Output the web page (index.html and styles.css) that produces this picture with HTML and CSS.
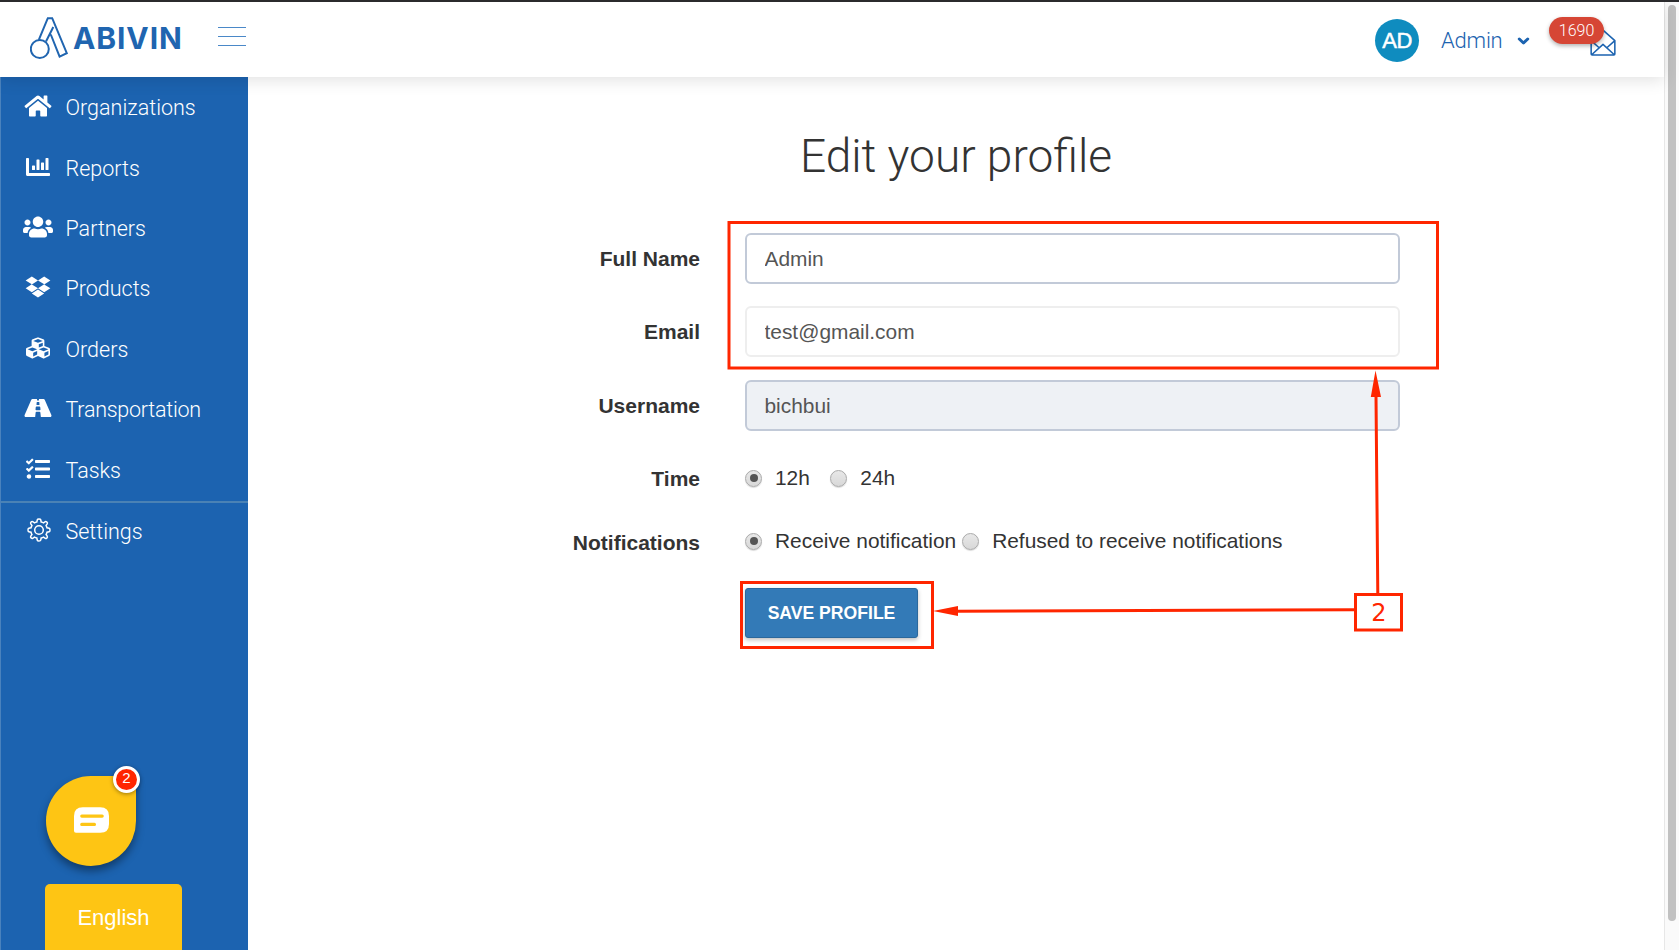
FILE: index.html
```html
<!DOCTYPE html>
<html lang="en">
<head>
<meta charset="utf-8">
<title>Edit your profile</title>
<link rel="stylesheet" href="styles.css">
</head>
<body>
<div class="app">
  <header class="header">
    <div class="brand">
      <svg class="brand-mark" viewBox="0 0 38 42" fill="none" stroke="#2065b0" stroke-width="2">
        <circle cx="9.800" cy="32" r="9"/>
        <path d="M8.800 22.800L17.800 1.200h4.400L36.800 36.200l-7.200 3.500L20.800 17.500M16 24.500L23.300 10"/>
      </svg>
      <span class="brand-name">ABIVIN</span>
    </div>
    <div class="burger"><i></i><i></i><i></i></div>
    <div class="account">
      <span class="avatar">AD</span>
      <span class="account-name">Admin</span>
      <svg class="chevron" viewBox="0 0 12 8" fill="none" stroke="#1c63b0" stroke-width="3" stroke-linecap="round" stroke-linejoin="round"><path d="M1.800 2L6 6l4.200-4"/></svg>
    </div>
    <div class="inbox">
      <svg class="inbox-icon" viewBox="0 0 27 28" fill="none" stroke="#1c63b0" stroke-width="1.600" stroke-linejoin="round"><path d="M1.200 12L13.500 1.200 25.800 12v14a1 1 0 0 1-1 1H2.200a1 1 0 0 1-1-1zM1.200 12l8.300 7.500M25.800 12l-8.300 7.500M2 26.500l11.500-10.500L25 26.500"/></svg>
      <span class="inbox-count">1690</span>
    </div>
  </header>
  <div class="body">
    <nav class="sidebar">
      <a class="item"><svg class="icon" viewBox="0 0 576 512"><path d="M280.370 148.260L96 300.110V464a16 16 0 0 0 16 16l112.060-.290a16 16 0 0 0 15.920-16V368a16 16 0 0 1 16-16h64a16 16 0 0 1 16 16v95.640a16 16 0 0 0 16 16.050L464 480a16 16 0 0 0 16-16V300L295.670 148.260a12.190 12.190 0 0 0-15.300 0zM571.600 251.470L488 182.560V44.050a12 12 0 0 0-12-12h-56a12 12 0 0 0-12 12v72.610L318.470 43a48 48 0 0 0-61 0L4.340 251.470a12 12 0 0 0-1.600 16.900l25.500 31A12 12 0 0 0 45.150 301l235.220-193.740a12.190 12.190 0 0 1 15.300 0L530.900 301a12 12 0 0 0 16.900-1.600l25.500-31a12 12 0 0 0-1.700-16.930z"/></svg><span>Organizations</span></a>
      <a class="item"><svg class="icon" viewBox="0 0 512 512"><path d="M332.800 320h38.400c6.400 0 12.800-6.400 12.800-12.800V172.800c0-6.400-6.400-12.800-12.800-12.800h-38.400c-6.400 0-12.800 6.400-12.800 12.800v134.400c0 6.400 6.400 12.800 12.800 12.800zm96 0h38.400c6.400 0 12.800-6.400 12.800-12.800V76.800c0-6.400-6.400-12.800-12.800-12.800h-38.400c-6.400 0-12.800 6.400-12.800 12.800v230.400c0 6.400 6.400 12.800 12.800 12.800zm-288 0h38.400c6.400 0 12.800-6.400 12.800-12.800v-70.400c0-6.400-6.400-12.800-12.800-12.800h-38.400c-6.400 0-12.800 6.400-12.800 12.800v70.400c0 6.400 6.400 12.800 12.800 12.800zm96 0h38.400c6.400 0 12.800-6.400 12.800-12.800V108.800c0-6.400-6.400-12.800-12.800-12.800h-38.400c-6.400 0-12.800 6.400-12.800 12.800v198.400c0 6.400 6.400 12.800 12.800 12.800zM496 384H64V80c0-8.840-7.160-16-16-16H16C7.160 64 0 71.160 0 80v336c0 17.670 14.330 32 32 32h464c8.840 0 16-7.160 16-16v-32c0-8.840-7.160-16-16-16z"/></svg><span>Reports</span></a>
      <a class="item"><svg class="icon" viewBox="0 0 640 512"><path d="M96 224c35.300 0 64-28.700 64-64s-28.700-64-64-64-64 28.700-64 64 28.700 64 64 64zm448 0c35.300 0 64-28.700 64-64s-28.700-64-64-64-64 28.700-64 64 28.700 64 64 64zm32 32h-64c-17.600 0-33.500 7.100-45.100 18.600 40.300 22.100 68.900 62 75.100 109.400h66c17.700 0 32-14.300 32-32v-32c0-35.300-28.700-64-64-64zm-256 0c61.900 0 112-50.100 112-112S381.900 32 320 32 208 82.100 208 144s50.100 112 112 112zm76.800 32h-8.300c-20.800 10-43.900 16-68.500 16s-47.600-6-68.500-16h-8.300C179.600 288 128 339.600 128 403.200V432c0 26.500 21.500 48 48 48h288c26.500 0 48-21.500 48-48v-28.800c0-63.600-51.600-115.200-115.200-115.200zm-223.700-13.400C161.500 263.100 145.600 256 128 256H64c-35.300 0-64 28.700-64 64v32c0 17.700 14.300 32 32 32h65.900c6.300-47.400 34.900-87.300 75.200-109.400z"/></svg><span>Partners</span></a>
      <a class="item"><svg class="icon" viewBox="0 0 528 512"><path d="M264.400 116.300l-132 84.300 132 84.300-132 84.300L0 284.100l132.300-84.300L0 116.300 132.300 32l132.100 84.300zM131.600 395.700l132-84.300 132 84.300-132 84.300-132-84.300zm132.800-111.600l132-84.300-132-83.600L395.700 32 528 116.300l-132.300 84.300L528 284.800l-132.300 84.300-131.300-85z"/></svg><span>Products</span></a>
      <a class="item"><svg class="icon" viewBox="0 0 512 512"><path d="M488.600 250.200L392 214V105.500c0-15-9.300-28.400-23.400-33.700l-100-37.500c-8.100-3.100-17.100-3.100-25.300 0l-100 37.500c-14.100 5.300-23.400 18.700-23.400 33.700V214l-96.600 36.200C9.300 255.500 0 268.900 0 283.900V394c0 13.600 7.700 26.100 19.900 32.200l100 50c10.100 5.100 22.100 5.100 32.200 0l103.900-52 103.900 52c10.100 5.100 22.100 5.100 32.200 0l100-50c12.200-6.100 19.900-18.600 19.900-32.200V283.900c0-15-9.300-28.400-23.400-33.700zM358 214.800l-85 31.900v-68.200l85-37v73.300zM154 104.100l102-38.200 102 38.200v.6l-102 41.400-102-41.400v-.6zm84 291.100l-85 42.500v-79.100l85-38.800v75.400zm0-112l-102 41.400-102-41.400v-.6l102-38.200 102 38.200v.6zm240 112l-85 42.500v-79.100l85-38.800v75.400zm0-112l-102 41.400-102-41.400v-.6l102-38.200 102 38.200v.6z"/></svg><span>Orders</span></a>
      <a class="item"><svg class="icon" viewBox="0 0 576 512"><path fill-rule="evenodd" d="M573.190 402.670l-139.790-320C428.430 71.290 417.600 64 405.680 64h-97.590l2.450 23.160c.5 4.720-3.210 8.840-7.960 8.840h-29.160c-4.750 0-8.460-4.120-7.960-8.840L267.910 64h-97.590c-11.930 0-22.760 7.290-27.730 18.670L2.800 402.670C-6.450 423.860 8.310 448 30.540 448h196.840l10.310-97.680c.86-8.140 7.720-14.320 15.910-14.320h68.800c8.190 0 15.050 6.180 15.910 14.320L348.620 448h196.840c22.230 0 36.990-24.140 27.730-45.330zM260.400 135.160a8 8 0 0 1 7.960-7.160h39.290c4.090 0 7.530 3.090 7.960 7.160l4.600 43.580c.75 7.090-4.810 13.260-11.930 13.260h-40.540c-7.130 0-12.680-6.170-11.930-13.260zM325.310 304h-74.620c-9.500 0-16.900-8.230-15.910-17.680l5.070-48c.86-8.140 7.720-14.320 15.910-14.320h64.480c8.190 0 15.050 6.180 15.910 14.320l5.070 48c1 9.450-6.410 17.680-15.910 17.680z"/></svg><span class="tight">Transportation</span></a>
      <a class="item"><svg class="icon" viewBox="0 0 512 512"><path d="M139.610 35.500a12 12 0 0 0-17 0L58.930 98.810l-22.700-22.120a12 12 0 0 0-17 0L3.530 92.410a12 12 0 0 0 0 17l47.590 47.400a12.780 12.780 0 0 0 17.610 0l15.590-15.620L156.520 69a12.090 12.090 0 0 0 .09-17zm0 159.190a12 12 0 0 0-17 0l-63.680 63.720-22.700-22.100a12 12 0 0 0-17 0L3.530 252a12 12 0 0 0 0 17L51 316.500a12.770 12.770 0 0 0 17.600 0l15.700-15.690 72.200-72.220a12 12 0 0 0 .09-16.900zM64 368c-26.490 0-48.590 21.500-48.590 48S37.530 464 64 464a48 48 0 0 0 0-96zm432 16H208a16 16 0 0 0-16 16v32a16 16 0 0 0 16 16h288a16 16 0 0 0 16-16v-32a16 16 0 0 0-16-16zm0-320H208a16 16 0 0 0-16 16v32a16 16 0 0 0 16 16h288a16 16 0 0 0 16-16V80a16 16 0 0 0-16-16zm0 160H208a16 16 0 0 0-16 16v32a16 16 0 0 0 16 16h288a16 16 0 0 0 16-16v-32a16 16 0 0 0-16-16z"/></svg><span>Tasks</span></a>
      <a class="item item-settings"><svg class="icon icon-line" viewBox="0 0 24 24"><circle cx="12" cy="12" r="4.300"/><path d="M10.300 1.800Q10.500 1 12 1T13.700 1.800L14.200 4Q15.600 4.300 16.500 4.900L18.300 3.700Q19 3.300 19.900 4.100T20.300 5.700L19.100 7.500Q19.700 8.400 20 9.800L22.200 10.300Q23 10.500 23 12T22.200 13.700L20 14.200Q19.700 15.600 19.100 16.500L20.300 18.300Q20.700 19 19.900 19.900T18.300 20.300L16.500 19.100Q15.600 19.700 14.200 20L13.700 22.200Q13.500 23 12 23T10.300 22.200L9.800 20Q8.400 19.700 7.500 19.100L5.700 20.300Q5 20.700 4.100 19.900T3.700 18.300L4.900 16.500Q4.300 15.600 4 14.200L1.800 13.700Q1 13.500 1 12T1.800 10.300L4 9.800Q4.300 8.400 4.900 7.500L3.700 5.700Q3.300 5 4.100 4.100T5.700 3.700L7.500 4.900Q8.400 4.300 9.800 4Z"/></svg><span>Settings</span></a>
    </nav>
    <main class="content">
      <h1 class="title">Edit your profile</h1>
      <form class="form">
        <label class="label">Full Name</label><input class="field" type="text" value="Admin">
        <label class="label">Email</label><input class="field field-plain" type="text" value="test@gmail.com">
        <label class="label">Username</label><input class="field field-locked" type="text" value="bichbui" readonly>
        <label class="label">Time</label>
        <div class="options options-time"><i class="radio on"></i><span>12h</span><i class="radio"></i><span>24h</span></div>
        <label class="label">Notifications</label>
        <div class="options options-notify"><i class="radio on"></i><span>Receive notification</span><i class="radio"></i><span>Refused to receive notifications</span></div>
        <button class="save" type="button">SAVE PROFILE</button>
      </form>
    </main>
    <div class="scroll"><i class="thumb"></i></div>
  </div>
  <svg class="marks" viewBox="0 0 1679 950" fill="none" stroke="#ff2600" stroke-width="3">
    <rect x="729" y="222.500" width="708.500" height="145.500"/>
    <rect x="741.500" y="582.500" width="191" height="65"/>
    <path d="M957 611.200L1354 609.700M1376 396L1377.800 593"/>
    <path d="M933 611l25-5v10zM1375.500 370.500l-4.700 26.500h10.200z" fill="#ff2600" stroke="none"/>
    <rect x="1355.500" y="594.500" width="46" height="35.500" fill="#fff"/>
    <text class="mark-text" x="1379" y="620.800">2</text>
  </svg>
  <div class="chat">
    <svg class="chat-icon" viewBox="0 0 36 26"><path d="M9 0h18q9 0 9 9v8q0 9-9 9H2q-2 0-2-2V9q0-9 9-9z" fill="#fff"/><path d="M8 9h21M8 17.500h13" stroke="#fec514" stroke-width="3.300" stroke-linecap="round"/></svg>
    <span class="chat-count">2</span>
  </div>
  <div class="language">English</div>
</div>
</body>
</html>
```
FILE: styles.css
```css
* { box-sizing: border-box; }
body { margin: 0; background: #fff; font-family: "Liberation Sans", sans-serif; font-size: 21px; color: #333; }
.app { position: relative; width: 1679px; height: 950px; overflow: hidden; display: flex; flex-direction: column; border-top: 2px solid #2b2b2d; }
.header { height: 75px; flex: none; display: flex; align-items: flex-start; padding-left: 30px; background: #fff; box-shadow: 0 3px 16px rgba(0,0,0,.12); z-index: 1; width: 1664px; }
.brand { display: flex; width: 188px; padding-top: 15px; }
.brand-mark { width: 38px; height: 42px; flex: none; }
.brand-name { margin: 4px 0 0 5px; font: 700 30px/34px Inter, sans-serif; color: #2065b0; letter-spacing: .9px; }
.burger { width: 28px; height: 19px; margin-top: 25px; display: flex; flex-direction: column; justify-content: space-between; }
.burger i { height: 1px; background: #4a88c8; }
.account { display: flex; align-items: center; margin-left: 1129px; padding-top: 17px; color: #1c63b0; }
.avatar { width: 44px; height: 43px; border-radius: 50%; background: #0f8cbf; color: #fff; font: 22px/44px "Liberation Sans", sans-serif; -webkit-text-stroke: .5px #fff; text-align: center; letter-spacing: -.5px; }
.account-name { width: 62px; margin-left: 22px; font: 300 22px/26px Roboto, sans-serif; letter-spacing: -.2px; }
.chevron { width: 13px; height: 8px; margin-left: 14px; }
.inbox { position: relative; width: 80px; height: 50px; margin-left: 19px; }
.inbox-icon { position: absolute; left: 41px; top: 27px; width: 26px; height: 27px; }
.inbox-count { position: absolute; left: 0; top: 15px; width: 55px; height: 27px; border-radius: 14px; background: #d64635; color: #fff; font: 300 16px/27px Roboto, sans-serif; text-align: center; box-shadow: 0 2px 4px rgba(0,0,0,.3); }
.body { flex: 1; display: flex; }
.sidebar { width: 248px; background: #1c63b0; border-left: 1px solid #4a82bd; }
.item { display: flex; align-items: center; height: 60.400px; color: #fff; font: 300 21.500px/30px Roboto, sans-serif; }
.item span { padding-top: 2px; }
.item .tight { letter-spacing: -.25px; }
.icon { width: 30px; height: 24px; margin: -2px 13px 0 21.500px; fill: #fff; }
.icon-line { margin-left: 23px; margin-right: 11.500px; fill: none; stroke: #fff; stroke-width: 1.500; }
.item-settings { height: 58px; margin-top: 1px; border-top: 2px solid #4a82b5; }
.content { width: 1416px; }
.title { margin: 51px 0 0; font: 300 46px/56px Roboto, sans-serif; text-align: center; }
.form { display: grid; grid-template-columns: 452px 655px; grid-template-rows: 73px 74px 73px 64px 71px 50px; column-gap: 45px; padding-top: 49px; align-items: start; }
.label { font-weight: 700; text-align: right; line-height: 51px; }
.field { width: 655px; height: 51px; padding: 0 17.500px; border: 2px solid #c2cad8; border-radius: 6px; background: #fff; font: 20.900px/24px "Liberation Sans", sans-serif; color: #555; }
.field-plain { border-color: #eee; }
.field-locked { background: #eef1f5; }
.options { display: flex; align-items: center; white-space: nowrap; height: 50px; font-size: 20.900px; }
.radio { width: 17px; height: 17px; flex: none; border: 1px solid #aaa; border-radius: 50%; background: linear-gradient(#e8e8e8, #d8d8d8); box-shadow: 0 1px 1px rgba(0,0,0,.15); display: flex; align-items: center; justify-content: center; }
.radio.on::after { content: ""; width: 8px; height: 8px; border-radius: 50%; background: #555; }
.options span { margin-left: 13px; }
.options-time .radio + span + .radio { margin-left: 20.500px; }
.options-notify .radio + span + .radio { margin-left: 6px; }
.options-notify { margin-top: -1px; }
.save { grid-column: 2; width: 173px; height: 50px; padding: 0; border: 1px solid #2b689c; border-radius: 3px; background: #337ab7; color: #fff; font: 700 17.600px/24px "Liberation Sans", sans-serif; box-shadow: 0 2px 4px rgba(0,0,0,.25); }
.scroll { width: 15px; margin-top: -75px; padding: 3px 0 0 3px; border-left: 1px solid #e7e7e7; background: #fafafa; }
.thumb { display: block; width: 8px; height: 916px; border-radius: 4px; background: #c1c1c1; }
.marks { position: absolute; left: 0; top: -2px; width: 1679px; height: 950px; z-index: 2; pointer-events: none; }
.mark-text { font: 24px "DejaVu Sans", sans-serif; fill: #ff2600; stroke: none; text-anchor: middle; }
.chat { position: absolute; left: 46px; top: 774px; width: 90px; height: 90px; border-radius: 50% 0 50% 50%; background: #fec514; box-shadow: 0 5px 9px rgba(0,0,0,.4); display: flex; align-items: center; justify-content: center; }
.chat-icon { width: 35px; height: 26px; margin: -2px 0 0 1px; }
.chat-count { position: absolute; left: 67px; top: -10px; width: 27px; height: 27px; border: 3px solid #fff; border-radius: 50%; background: #ff2600; color: #fff; font: 15px/18px "Liberation Sans", sans-serif; text-align: center; box-shadow: 0 1px 4px rgba(0,0,0,.4); }
.language { position: absolute; left: 45px; top: 882px; width: 137px; height: 68px; border-radius: 5px 5px 0 0; background: #fec514; color: #fff; font-size: 22px; line-height: 68px; text-align: center; }
```
